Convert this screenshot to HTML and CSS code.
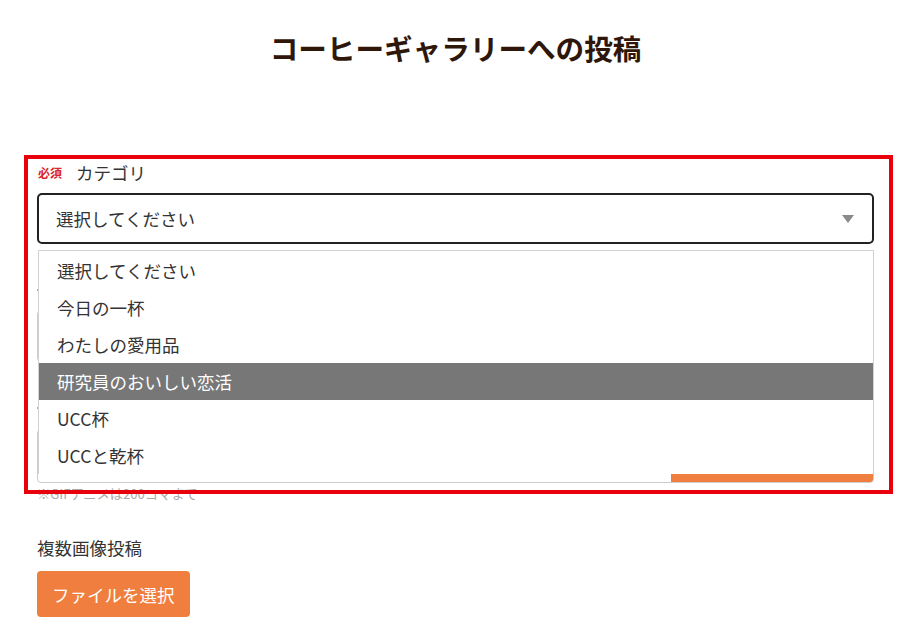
FILE: index.html
```html
<!DOCTYPE html>
<html lang="ja">
<head>
    <meta charset="UTF-8">
    <meta name="viewport" content="width=device-width, initial-scale=1.0">
    <title>コーヒーギャラリーへの投稿</title>
    <link rel="stylesheet" href="styles.css">
</head>
<body>

<div class="page">
    <h1 class="page-title">コーヒーギャラリーへの投稿</h1>

    <section class="post-form">
        <!-- annotation frame -->
        <div class="mark-frame"></div>

        <div class="field field-category">
            <div class="field-label">
                <span class="required">必須</span>
                <span>カテゴリ</span>
            </div>
            <div class="select-box">
                <span>選択してください</span>
                <span class="select-arrow"></span>
            </div>

            <ul class="select-list">
                <li>選択してください</li>
                <li>今日の一杯</li>
                <li>わたしの愛用品</li>
                <li class="active">研究員のおいしい恋活</li>
                <li>UCC杯</li>
                <li>UCCと乾杯</li>
            </ul>
        </div>

        <!-- fields hidden behind the open list -->
        <div class="field">
            <div class="field-label"><span class="label-dot"></span></div>
            <div class="text-box"></div>
        </div>

        <div class="field">
            <div class="field-label"><span class="label-dot"></span></div>
            <div class="file-box">
                <span class="file-name"></span>
                <span class="file-button"></span>
            </div>
            <p class="note">※GIFアニメは200コマまで</p>
        </div>

        <div class="field field-multi">
            <div class="field-label">
                <span>複数画像投稿</span>
            </div>
            <button class="btn-file">ファイルを選択</button>
        </div>
    </section>
</div>

</body>
</html>
```

FILE: styles.css
```css
body {
    font-family: 'Noto Sans CJK JP', 'Noto Sans', sans-serif;
    background-color: #ffffff;
    margin: 0;
    padding: 0;
    color: #333;
}

.page {
    width: 837px;
    margin-left: 37px;
    padding-top: 27px;
}

.page-title {
    margin: 0;
    text-align: center;
    font-size: 28.6px;
    line-height: 42px;
    font-weight: bold;
    color: #2e1709;
}

.post-form {
    position: relative;
    margin-top: 91px;
}

.mark-frame {
    position: absolute;
    top: -5px;
    left: -13px;
    width: 861px;
    height: 331px;
    border: 4px solid #e8000d;
    z-index: 5;
    pointer-events: none;
}

.field {
    position: relative;
}

.field-label {
    display: flex;
    align-items: center;
    gap: 14px;
    height: 24px;
    font-size: 17.5px;
}

.required {
    font-size: 12px;
    font-weight: bold;
    color: #d8232a;
    margin-left: 1px;
}

.label-dot {
    width: 2px;
    height: 2px;
    background-color: #d9a27a;
}

.select-box {
    display: flex;
    justify-content: space-between;
    align-items: center;
    height: 47px;
    margin-top: 9px;
    padding: 0 17px 0 17px;
    border: 2px solid #222;
    border-radius: 5px;
    font-size: 17.5px;
}

.select-arrow {
    width: 0;
    height: 0;
    border-left: 6px solid transparent;
    border-right: 6px solid transparent;
    border-top: 8px solid #8a8a8a;
    margin-right: 1px;
}

.select-list {
    position: absolute;
    top: calc(100% + 6px);
    left: 1px;
    right: 0;
    margin: 0;
    padding: 1px 0 0;
    list-style: none;
    background-color: #fff;
    border: 1px solid #d2d2d2;
    border-bottom: none;
    z-index: 3;
}

.select-list li {
    height: 37px;
    line-height: 37px;
    padding-left: 18px;
    font-size: 17.5px;
    color: #333;
}

.select-list li.active {
    background-color: #777;
    color: #fff;
}

.field + .field {
    margin-top: 34px;
}

.text-box {
    height: 50px;
    margin-top: 8px;
    border: 1px solid #ccc;
    border-radius: 4px;
}

.file-box {
    display: flex;
    justify-content: space-between;
    height: 52px;
    margin-top: 9px;
    border: 1px solid #ccc;
    border-radius: 4px;
    overflow: hidden;
}

.file-button {
    width: 202px;
    background-color: #f07e3e;
}

.note {
    margin: 2px 0 0;
    font-size: 13.2px;
    line-height: 18px;
    color: #aaa;
}

.field.field-multi {
    margin-top: 32px;
}

.btn-file {
    margin-top: 12px;
    height: 46px;
    padding: 0 15px;
    background-color: #f07e3e;
    color: white;
    font-family: inherit;
    font-size: 17.5px;
    border: none;
    border-radius: 4px;
    cursor: pointer;
}
```
